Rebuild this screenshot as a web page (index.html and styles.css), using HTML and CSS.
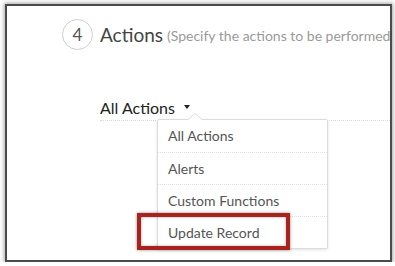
FILE: index.html
```html
<!DOCTYPE html>
<html lang="en">
<head>
    <meta charset="UTF-8">
    <meta name="viewport" content="width=device-width, initial-scale=1.0">
    <title>Actions</title>
    <link rel="stylesheet" href="styles.css">
</head>
<body>

    <div class="frame">
        <div class="step">
            <span class="step-num">4</span>
            <span class="step-title">Actions</span>
            <span class="step-hint">(Specify the actions to be performed</span>
        </div>

        <div class="filter">
            <span class="filter-label">All Actions</span>
            <span class="caret"></span>
        </div>

        <ul class="menu">
            <li>All Actions</li>
            <li>Alerts</li>
            <li>Custom Functions</li>
            <li>Update Record</li>
        </ul>

        <div class="highlight"></div>
    </div>

</body>
</html>
```

FILE: styles.css
```css
body {
    margin: 0;
    background: #fff;
    font-family: Lato, "Open Sans", Arial, sans-serif;
}
.frame {
    position: relative;
    margin: 4px 3px 0 5px;
    width: 383px;
    height: 254px;
    border: 2px solid #4b4b4b;
    box-shadow: 0 0 4px 1px rgba(0, 0, 0, 0.35);
    overflow: hidden;
    background: #fff;
}
.step {
    display: flex;
    align-items: center;
    white-space: nowrap;
    padding: 13px 0 0 55px;
}
.step-num {
    width: 29px;
    height: 29px;
    border: 1px solid #cfcfcf;
    border-radius: 50%;
    display: flex;
    align-items: center;
    justify-content: center;
    font-size: 17px;
    color: #555;
    flex-shrink: 0;
}
.step-title {
    margin-left: 7px;
    font-size: 19px;
    color: #444;
}
.step-hint {
    margin-left: 4px;
    margin-top: 2px;
    font-size: 14px;
    color: #9a9a9a;
}
.filter {
    display: flex;
    align-items: center;
    margin: 45px 0 0 93px;
    height: 25px;
    border-bottom: 1px dotted #d6d6d6;
}
.filter-label {
    font-size: 16px;
    color: #222;
}
.caret {
    margin: 0 0 2px 9px;
    width: 0;
    height: 0;
    border-left: 3.5px solid transparent;
    border-right: 3.5px solid transparent;
    border-top: 4px solid #222;
}
.menu {
    position: absolute;
    left: 150px;
    top: 113px;
    width: 169px;
    margin: 0;
    padding: 0;
    list-style: none;
    background: #fff;
    border: 1px solid #dcdcdc;
    border-radius: 2px;
    box-shadow: 0 1px 3px rgba(0, 0, 0, 0.12);
}
.menu::before,
.menu::after {
    content: "";
    position: absolute;
    left: 29px;
    width: 0;
    height: 0;
    border-left: 8px solid transparent;
    border-right: 8px solid transparent;
}
.menu::before {
    top: -7px;
    border-bottom: 7px solid #dcdcdc;
}
.menu::after {
    top: -6px;
    border-bottom: 7px solid #fff;
}
.menu li {
    height: 31px;
    line-height: 31px;
    padding-left: 10px;
    font-size: 14px;
    color: #555;
    border-top: 1px dotted #e2e2e2;
}
.menu li:first-child {
    border-top: none;
    height: 32px;
}
.highlight {
    position: absolute;
    left: 130px;
    top: 207px;
    width: 145px;
    height: 29px;
    border: 4px solid #a8231d;
    box-shadow: 0 0 3px rgba(0, 0, 0, 0.45), inset 0 0 3px rgba(0, 0, 0, 0.35);
}
```
